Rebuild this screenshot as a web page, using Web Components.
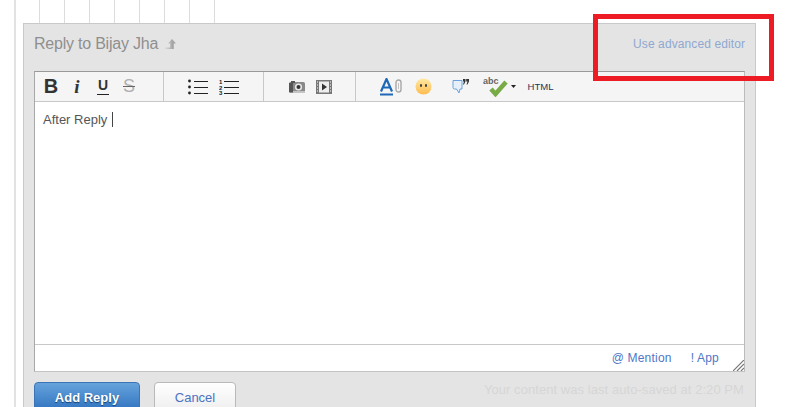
<!DOCTYPE html>
<html>
<head>
<meta charset="utf-8">
<title>Reply</title>
<style>
  html, body { margin: 0; height: 407px; overflow: hidden; background: #fff; }
</style>
</head>
<body>
<reply-page>
  <reply-panel title-text="Reply to Bijay Jha" advanced="Use advanced editor">
    <rich-editor>After Reply </rich-editor>
    <action-button slot="actions" kind="primary">Add Reply</action-button>
    <action-button slot="actions" kind="plain">Cancel</action-button>
    <span slot="saved">Your content was last auto-saved at 2:20 PM</span>
  </reply-panel>
</reply-page>

<script>
class ReplyPage extends HTMLElement {
  constructor() {
    super();
    this.shadowDOM = this.attachShadow({ mode: "open" });
  }

  connectedCallback() {
    const cells = new Array(8).fill("<i></i>").join("");
    this.shadowDOM.innerHTML = `
      <style>
        :host { display: block; position: relative; height: 407px; overflow: hidden; }
        .page { margin-left: 14px; height: 407px; border-left: 2px solid #e2e2e2; padding-left: 7px; }
        .cells { display: flex; height: 23px; margin-left: 1px; padding-left: 15px; }
        .cells i { display: block; width: 25px; box-sizing: border-box; border-left: 1px solid #dcdcdc; }
        .cells i:last-child { width: 1px; }
        .mark { position: absolute; left: 593px; top: 14px; width: 181px; height: 67px; box-sizing: border-box; border: 5px solid #ed1c24; }
      </style>
      <div class="page">
        <div class="cells">${cells}</div>
        <slot></slot>
      </div>
      <div class="mark"></div>
    `;
  }
}

class ReplyPanel extends HTMLElement {
  constructor() {
    super();
    this.shadowDOM = this.attachShadow({ mode: "open" });
  }

  connectedCallback() {
    this.shadowDOM.innerHTML = `
      <style>
        :host { display: block; width: 733px; box-sizing: border-box; font-family: "Liberation Sans", Arial, sans-serif; }
        .box { height: 400px; box-sizing: border-box; background: #e4e4e4; border: 1px solid #c9c9c9; border-bottom: 0; padding: 0 10px; }
        header { display: flex; justify-content: space-between; align-items: center; height: 47px; padding-bottom: 7px; box-sizing: border-box; }
        h2 { margin: 0; display: flex; align-items: center; gap: 7px; font-size: 16px; font-weight: normal; color: #8f8f8f; letter-spacing: -0.22px; }
        a { font-size: 12px; letter-spacing: 0.1px; color: #8fa8d0; }
        .bar { display: flex; justify-content: space-between; align-items: flex-start; margin-top: 10px; }
        .actions { display: flex; gap: 14px; }
        .saved { font-size: 13px; letter-spacing: 0.06px; color: #d6d6d6; margin-right: 1px; }
      </style>
      <div class="box">
        <header>
          <h2>${this.getAttribute("title-text")}
            <svg width="12" height="12" viewBox="0 0 12 12">
              <defs><linearGradient id="fade" x1="1" x2="0" y1="0" y2="0"><stop offset="0.3" stop-color="#a4a4a4"/><stop offset="1" stop-color="#dcdcdc"/></linearGradient></defs>
              <path d="M7 1 L11 5.5 H8.8 V11 H0 V9.5 H5.2 V5.5 H3 Z" fill="url(#fade)"/>
            </svg>
          </h2>
          <a>${this.getAttribute("advanced")}</a>
        </header>
        <div class="slot-main"><slot></slot></div>
        <div class="bar">
          <div class="actions"><slot name="actions"></slot></div>
          <div class="saved"><slot name="saved"></slot></div>
        </div>
      </div>
    `;
  }
}

class ToolGroup extends HTMLElement {
  constructor() {
    super();
    this.shadowDOM = this.attachShadow({ mode: "open" });
  }

  connectedCallback() {
    const pad = this.getAttribute("pad") || 0;
    const size = this.getAttribute("size") || 90;
    this.shadowDOM.innerHTML = `
      <style>
        :host { display: flex; align-items: center; box-sizing: border-box; height: 100%; width: ${size}px; padding-left: ${pad}px; border-right: 1px solid #c8c8c8; }
        :host([last]) { border-right: 0; flex: 1; }
      </style>
      <slot></slot>
    `;
  }
}

class ToolButton extends HTMLElement {
  constructor() {
    super();
    this.shadowDOM = this.attachShadow({ mode: "open" });
  }

  connectedCallback() {
    const wide = this.getAttribute("wide") || 26;
    this.shadowDOM.innerHTML = `
      <style>
        :host { display: flex; align-items: center; justify-content: center; width: ${wide}px; height: 100%; flex: none; }
      </style>
      <slot></slot>
    `;
  }
}

class RichEditor extends HTMLElement {
  constructor() {
    super();
    this.shadowDOM = this.attachShadow({ mode: "open" });
  }

  connectedCallback() {
    this.shadowDOM.innerHTML = `
      <style>
        :host { display: block; position: relative; height: 301px; box-sizing: border-box; background: #fff; border: 1px solid #c4c4c4; border-top-color: #999; border-left-color: #a8a8a8; border-right-color: #bbb; }
        .tools { display: flex; height: 30px; box-sizing: border-box; background: #f5f5f5; border-bottom: 1px solid #c8c8c8; }
        .body { height: 242px; box-sizing: border-box; padding: 9px 8px 0; font-size: 13px; line-height: 17px; color: #555; }
        .caret { display: inline-block; width: 1px; height: 15px; background: #444; vertical-align: -3px; margin-left: 1px; }
        .foot { display: flex; justify-content: flex-end; gap: 19px; align-items: center; height: 27px; box-sizing: border-box; border-top: 1px solid #c8c8c8; padding-right: 25px; font-size: 12px; letter-spacing: 0.2px; color: #4f76c6; }
        .grip { position: absolute; right: 0; bottom: 0; }
        .b { font: bold 20px "Liberation Sans", sans-serif; color: #333; }
        .i { font: italic bold 19px "Liberation Serif", serif; color: #333; }
        .u { font: bold 14px "Liberation Sans", sans-serif; color: #333; border-bottom: 1px solid #222; line-height: 14px; padding: 0 1px 2px; }
        .s { font: 18px "Liberation Sans", sans-serif; color: #b0b0b0; text-decoration: line-through; text-decoration-color: #666; text-decoration-thickness: 1px; }
        .html { font: 9.5px "Liberation Sans", sans-serif; color: #1d3560; }
        svg { display: block; }
        svg text { font-family: "Liberation Sans", sans-serif; }
      </style>
      <div class="tools">
        <tool-group size="129" pad="3">
          <tool-button><span class="b">B</span></tool-button>
          <tool-button><span class="i">i</span></tool-button>
          <tool-button><span class="u">U</span></tool-button>
          <tool-button><span class="s">S</span></tool-button>
        </tool-group>
        <tool-group size="100" pad="18">
          <tool-button wide="31">
            <svg width="20" height="16" viewBox="0 0 20 16"><g fill="#222"><circle cx="1.5" cy="2" r="1.4"/><circle cx="1.5" cy="8" r="1.4"/><circle cx="1.5" cy="14" r="1.4"/></g><path d="M6 2.5H20M6 8.5H20M6 14.5H20" stroke="#222"/></svg>
          </tool-button>
          <tool-button wide="31">
            <svg width="20" height="16" viewBox="0 0 20 16"><g fill="#222" font-size="6" font-weight="bold"><text x="0" y="5">1</text><text x="0" y="10.5">2</text><text x="0" y="16">3</text></g><path d="M5 2.5H20M5 8.5H20M5 14.5H20" stroke="#222"/></svg>
          </tool-button>
        </tool-group>
        <tool-group size="92" pad="19">
          <tool-button wide="27">
            <svg width="16" height="14" viewBox="0 0 16 14"><rect x="0" y="2" width="16" height="11" rx="1.5" fill="#8a8a8a"/><rect x="2" y="1" width="4" height="2" fill="#555"/><rect x="0" y="3" width="4" height="9" fill="#555"/><circle cx="9.5" cy="7" r="3.6" fill="#e8e8e8"/><circle cx="9.5" cy="7" r="2" fill="#333"/><rect x="4" y="11" width="12" height="2" fill="#c4c4c4"/></svg>
          </tool-button>
          <tool-button wide="27">
            <svg width="16" height="14" viewBox="0 0 16 14"><rect width="16" height="14" fill="#777"/><rect x="3" y="1.5" width="10" height="11" fill="#eee"/><path d="M6 3.5 L11 7 L6 10.5 Z" fill="#333"/><path d="M1 2H2M1 5H2M1 8H2M1 11H2M14 2H15M14 5H15M14 8H15M14 11H15" stroke="#fff"/></svg>
          </tool-button>
        </tool-group>
        <tool-group last pad="21">
          <tool-button wide="28">
            <span style="display:flex;align-items:flex-end;gap:2px">
              <svg width="13" height="18" viewBox="0 0 13 18"><path d="M1 13.5 L6.5 1 L12 13.5 M3 9.5 H10" fill="none" stroke="#1f68b8" stroke-width="2.2"/><path d="M0 16.5H13" stroke="#1f68b8" stroke-width="2"/></svg>
              <svg width="7" height="14" viewBox="0 0 7 14" style="margin-bottom:3px"><rect x="1" y="1" width="5" height="12" rx="2.5" fill="none" stroke="#a8a8a8" stroke-width="1.4"/><path d="M3.5 4V10" stroke="#c4c4c4"/></svg>
            </span>
          </tool-button>
          <tool-button wide="36">
            <svg width="17" height="17" viewBox="0 0 17 17"><defs><linearGradient id="sm" x1="0" x2="0" y1="0" y2="1"><stop offset="0" stop-color="#ffe9a0"/><stop offset="1" stop-color="#fdbb50"/></linearGradient></defs><circle cx="8.5" cy="8.5" r="8" fill="url(#sm)"/><rect x="5" y="6" width="2" height="3" rx="1" fill="#444"/><rect x="10" y="6" width="2" height="3" rx="1" fill="#444"/></svg>
          </tool-button>
          <tool-button wide="38">
            <svg width="17" height="17" viewBox="0 0 17 17"><path d="M1 2.5 H10 V11 H8 L7 15 L4.5 11 H2.5 Q1 11 1 9.5 Z" fill="#e6f0fb" stroke="#6ea0d8"/><path d="M11 1h2.5v2.5L12 6.5h-1l1-3h-1zM14.2 1H17v2.5L15.5 6.5h-1l1-3h-1.3z" fill="#333"/></svg>
          </tool-button>
          <tool-button wide="32">
            <svg width="25" height="20" viewBox="0 0 25 20"><text x="0" y="7" font-size="9" font-weight="bold" fill="#666">abc</text><path d="M8 12 L12.5 17 L23 5" fill="none" stroke="#78ab45" stroke-width="4.5"/></svg>
          </tool-button>
          <tool-button wide="5">
            <svg width="5" height="3" viewBox="0 0 5 3"><path d="M0 0H5L2.5 3Z" fill="#222"/></svg>
          </tool-button>
          <tool-button wide="49"><span class="html">HTML</span></tool-button>
        </tool-group>
      </div>
      <div class="body"><slot></slot><span class="caret"></span></div>
      <div class="foot"><span>@ Mention</span><span>! App</span></div>
      <svg class="grip" width="11" height="11" viewBox="0 0 11 11"><path d="M0 11L11 0M4 11L11 4M8 11L11 8" stroke="#777" stroke-width="1.2"/></svg>
    `;
  }
}

class ActionButton extends HTMLElement {
  constructor() {
    super();
    this.shadowDOM = this.attachShadow({ mode: "open" });
  }

  connectedCallback() {
    const primary = this.getAttribute("kind") === "primary";
    this.shadowDOM.innerHTML = `
      <style>
        :host { display: block; font-size: 13px; }
        .btn { display: flex; justify-content: center; align-items: center; box-sizing: border-box; height: 30px; border-radius: 4px;
          width: ${primary ? 106 : 82}px;
          ${primary
            ? "background: linear-gradient(#66a3dc, #2f72bf); border: 1px solid #3c75b5; color: #fff; font-weight: bold; text-shadow: 0 1px 1px #123f77;"
            : "background: linear-gradient(#fff, #eee); border: 1px solid #b9b9b9; color: #4a72c4;"}
        }
      </style>
      <div class="btn"><slot></slot></div>
    `;
  }
}

customElements.define("tool-group", ToolGroup);
customElements.define("tool-button", ToolButton);
customElements.define("rich-editor", RichEditor);
customElements.define("action-button", ActionButton);
customElements.define("reply-panel", ReplyPanel);
customElements.define("reply-page", ReplyPage);
</script>
</body>
</html>
